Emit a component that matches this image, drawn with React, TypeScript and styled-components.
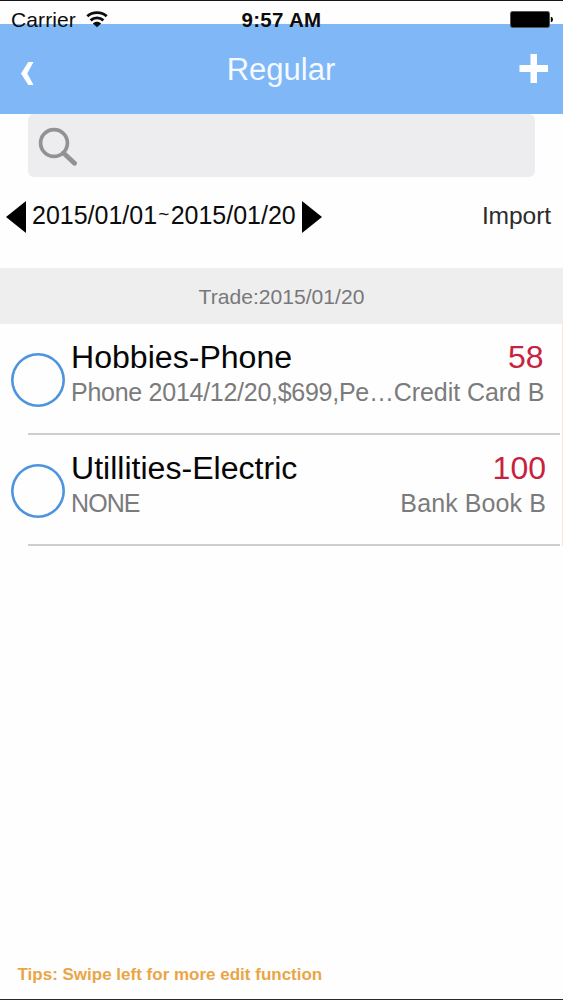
import React from 'react';
import styled, { createGlobalStyle } from 'styled-components';

const GlobalStyle = createGlobalStyle`
  * { box-sizing: border-box; }
  body {
    margin: 0;
    background: #fefefe;
    font-family: "Liberation Sans", Arial, sans-serif;
    color: #0c0c0c;
  }
  svg { display: block; }
`;

const Screen = styled.div`
  width: 563px;
  height: 1000px;
  display: flex;
  flex-direction: column;
  border-top: 1px solid #161618;
  border-bottom: 1px solid #2a2a2e;
  overflow: hidden;
  white-space: nowrap;
`;

const Header = styled.header`
  height: 113px;
  flex: none;
  display: flex;
  flex-direction: column;
  background: linear-gradient(#fefefe 23.5px, #80b7f6 23.5px);
`;

const StatusBar = styled.div`
  height: 36px;
  display: grid;
  grid-template-columns: 1fr auto 1fr;
  align-items: center;
  padding: 0 10px 0 11px;
  font-size: 21px;
`;

const Carrier = styled.div`
  display: flex;
  align-items: center;
  gap: 10px;
  padding-top: 1px;
  letter-spacing: 0.1px;
`;

const Clock = styled.div`
  padding: 1px 1px 0 0;
  font-weight: bold;
  font-size: 20.5px;
  letter-spacing: 0.3px;
`;

const Battery = styled.svg`
  justify-self: end;
`;

const NavBar = styled.div`
  flex: 1;
  display: grid;
  grid-template-columns: 100px 1fr 100px;
  align-items: start;
  padding: 0 15px 0 20px;
`;

const BackButton = styled.svg`
  margin-top: 24px;
`;

const Title = styled.h1`
  margin: 15px 6px 0 0;
  text-align: center;
  color: #f4faff;
  font-size: 31px;
  line-height: 36px;
  font-weight: normal;
`;

const AddButton = styled.svg`
  justify-self: end;
  margin-top: 17px;
`;

const SearchBox = styled.div`
  flex: none;
  margin: 0 28px;
  height: 63px;
  padding: 12px 10px;
  background: #ededef;
  border-radius: 6px;
`;

const RangeBar = styled.div`
  flex: none;
  height: 91px;
  display: flex;
  justify-content: space-between;
  padding: 24px 12px 0 6px;
`;

const Range = styled.div`
  display: flex;
  align-items: flex-start;
  font-size: 25px;
  line-height: 29px;
`;

const RangeText = styled.div`
  width: 276px;
  padding-left: 6px;
  display: flex;
`;

const Tilde = styled.span`
  width: 13.5px;
  text-align: center;
  font-size: 19px;
  line-height: 25px;
`;

const Import = styled.div`
  font-size: 24.6px;
  line-height: 29px;
  letter-spacing: -0.1px;
  color: #2b2b2d;
`;

const SectionHeader = styled.div`
  flex: none;
  height: 56px;
  line-height: 57px;
  background: #eeeeef;
  color: #78787a;
  text-align: center;
  font-size: 21.1px;
`;

const List = styled.div`
  flex: 1;
`;

const Item = styled.div`
  height: 111px;
  display: flex;
  padding-left: 11px;
  border-right: 1px solid #fbe9d0;
`;

const Circle = styled.div`
  flex: none;
  width: 54px;
  height: 54px;
  margin-top: 29px;
  box-shadow: inset 0 0 0 2.6px #4d93df;
  border-radius: 50%;
`;

const ItemBody = styled.div`
  flex: 1;
  min-width: 0;
  display: flex;
  flex-direction: column;
  padding: 14px 0 0 6px;
`;

const Line = styled.div<{ $inset: number }>`
  display: flex;
  justify-content: space-between;
  padding-right: ${(p) => p.$inset}px;
`;

const Name = styled.div`
  font-size: 32.1px;
  line-height: 38px;
  color: #060606;
`;

const Amount = styled.div`
  font-size: 32px;
  line-height: 38px;
  color: #c9223f;
`;

const Detail = styled.div<{ $spacing: number }>`
  font-size: 25px;
  line-height: 32px;
  color: #7b7b7c;
  letter-spacing: ${(p) => p.$spacing}px;
`;

const Divider = styled.div`
  height: 2px;
  margin: auto 2px 0 -43px;
  background: #cececf;
`;

const Tips = styled.footer`
  height: 49px;
  padding: 15px 17.5px 0;
  font-size: 17px;
  line-height: 20px;
  font-weight: bold;
  color: #eaa546;
`;

type Entry = {
  name: string;
  amount: string;
  note: string;
  account: string;
  inset: number;
  noteSpacing: number;
  accountSpacing: number;
};

const entries: Entry[] = [
  { name: 'Hobbies-Phone', amount: '58', note: 'Phone 2014/12/20,$699,Pe…', account: 'Credit Card B', inset: 18.5, noteSpacing: -0.27, accountSpacing: -0.05 },
  { name: 'Utillities-Electric', amount: '100', note: 'NONE', account: 'Bank Book B', inset: 16, noteSpacing: -0.9, accountSpacing: 0.1 },
];

export default function App() {
  return (
    <Screen>
      <GlobalStyle />
      <Header>
        <StatusBar>
          <Carrier>
            Carrier
            <svg width="22" height="17" viewBox="0 0 22 17" fill="none" stroke="#0c0c0c" strokeWidth="2.8">
              <path d="M1.3 5.2C6.6 .3 15.4 .3 20.7 5.2" />
              <path d="M4.6 9.4C8.3 6 13.7 6 17.4 9.4" />
              <path d="M11 16.2L6.8 12.4C9.4 10.3 12.6 10.3 15.2 12.4Z" fill="#0c0c0c" stroke="none" />
            </svg>
          </Carrier>
          <Clock>9:57 AM</Clock>
          <Battery width="43" height="17" viewBox="0 0 43 17">
            <rect x="0.5" y="0.5" width="39" height="16" rx="2" fill="#000" stroke="#555" />
            <path d="M40.8 5.8Q43 6 43 8.5T40.8 11.2Z" fill="#000" />
          </Battery>
        </StatusBar>
        <NavBar>
          <BackButton width="14" height="25" viewBox="0 0 14 25">
            <path d="M8.3 1H13.5L7.3 12.5L13.5 24H8.3L1 12.5Z" fill="#fff" />
          </BackButton>
          <Title>Regular</Title>
          <AddButton width="29" height="29" viewBox="0 0 29 29">
            <path d="M11.5 0H18V11H29V18H18V29H11.5V18H0.5V11H11.5Z" fill="#fff" />
          </AddButton>
        </NavBar>
      </Header>
      <SearchBox>
        <svg width="40" height="40" viewBox="0 0 40 40" fill="none" stroke="#929294">
          <circle cx="16" cy="17" r="13.4" strokeWidth="3.7" />
          <path d="M25.5 27L36.5 37.3" strokeWidth="4.8" strokeLinecap="round" />
        </svg>
      </SearchBox>
      <RangeBar>
        <Range>
          <svg width="20" height="32" viewBox="0 0 20 32">
            <path d="M0 16L20 0V32Z" fill="#000" />
          </svg>
          <RangeText>
            2015/01/01<Tilde>~</Tilde>2015/01/20
          </RangeText>
          <svg width="20" height="32" viewBox="0 0 20 32">
            <path d="M20 16L0 0V32Z" fill="#000" />
          </svg>
        </Range>
        <Import>Import</Import>
      </RangeBar>
      <SectionHeader>Trade:2015/01/20</SectionHeader>
      <List>
        {entries.map((e) => (
          <Item key={e.name}>
            <Circle />
            <ItemBody>
              <Line $inset={e.inset}>
                <Name>{e.name}</Name>
                <Amount>{e.amount}</Amount>
              </Line>
              <Line $inset={e.inset}>
                <Detail $spacing={e.noteSpacing}>{e.note}</Detail>
                <Detail $spacing={e.accountSpacing}>{e.account}</Detail>
              </Line>
              <Divider />
            </ItemBody>
          </Item>
        ))}
      </List>
      <Tips>Tips: Swipe left for more edit function</Tips>
    </Screen>
  );
}
